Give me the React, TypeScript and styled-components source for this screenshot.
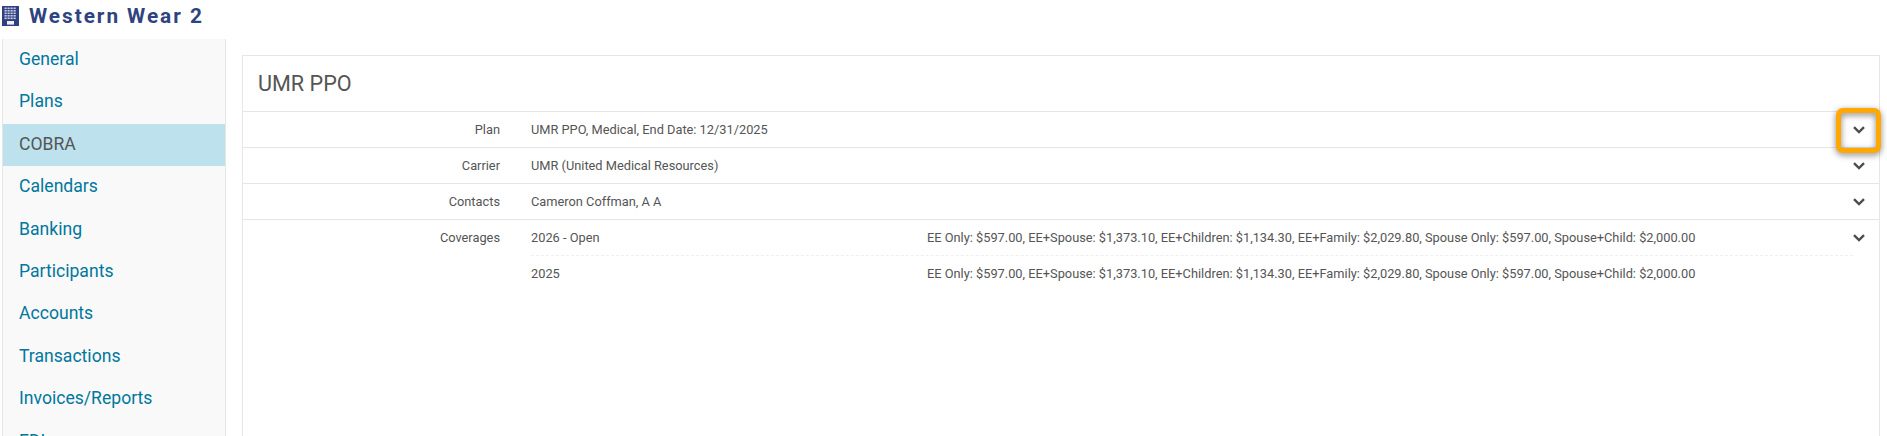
import React from "react";
import styled, { createGlobalStyle } from "styled-components";

const navItems = [
  "General",
  "Plans",
  "COBRA",
  "Calendars",
  "Banking",
  "Participants",
  "Accounts",
  "Transactions",
  "Invoices/Reports",
  "EDI",
];

const rates =
  "EE Only: $597.00, EE+Spouse: $1,373.10, EE+Children: $1,134.30, EE+Family: $2,029.80, Spouse Only: $597.00, Spouse+Child: $2,000.00";

const Chevron = () => (
  <svg width="12" height="8" viewBox="0 0 12 8" aria-hidden="true">
    <path d="M1 1.2 6 6 11 1.2" fill="none" stroke="#4d4d4d" strokeWidth="2.4" />
  </svg>
);

const BuildingIcon = () => (
  <svg width="17" height="20" viewBox="0 0 17 20" aria-hidden="true">
    <rect width="17" height="20" fill="#2f3f7f" />
    <g fill="#c3cae2">
      {[1.5, 4, 6.5, 9, 11.5].map((y) =>
        [2.5, 5.5, 8.5, 11.5].map((x) => <rect key={`${x}-${y}`} x={x} y={y} width="2.2" height="1.6" />)
      )}
    </g>
    <rect x="5" y="15" width="7" height="3.6" fill="#eef0f7" />
  </svg>
);

export default function App() {
  return (
    <Page>
      <GlobalStyle />
      <Header>
        <BuildingIcon />
        <CompanyName>Western Wear 2</CompanyName>
      </Header>
      <Body>
        <Sidebar>
          {navItems.map((item) => (
            <NavItem key={item} $active={item === "COBRA"}>
              {item}
            </NavItem>
          ))}
        </Sidebar>
        <Panel>
          <PanelTitle>UMR PPO</PanelTitle>
          <Row>
            <Label>Plan</Label>
            <Value>UMR PPO, Medical, End Date: 12/31/2025</Value>
            <ToggleSlot>
              <Highlight />
              <Chevron />
            </ToggleSlot>
          </Row>
          <Row>
            <Label>Carrier</Label>
            <Value>UMR (United Medical Resources)</Value>
            <ToggleSlot>
              <Chevron />
            </ToggleSlot>
          </Row>
          <Row>
            <Label>Contacts</Label>
            <Value>Cameron Coffman, A A</Value>
            <ToggleSlot>
              <Chevron />
            </ToggleSlot>
          </Row>
          <Row>
            <Label>Coverages</Label>
            <CoverageList>
              <CoverageRow>
                <Year>2026 - Open</Year>
                <span>{rates}</span>
              </CoverageRow>
              <CoverageRow>
                <Year>2025</Year>
                <span>{rates}</span>
              </CoverageRow>
            </CoverageList>
            <ToggleSlot>
              <Chevron />
            </ToggleSlot>
          </Row>
        </Panel>
      </Body>
    </Page>
  );
}

const GlobalStyle = createGlobalStyle`
  html, body {
    margin: 0;
    height: 436px;
    overflow: hidden;
    background: #fff;
  }
  body {
    font-family: Roboto, "Liberation Sans", sans-serif;
    color: #555;
  }
`;

const Page = styled.div`
  width: 1887px;
  height: 436px;
  overflow: hidden;
  padding-left: 2px;
  box-sizing: border-box;
`;

const Header = styled.header`
  display: flex;
  align-items: center;
  gap: 10px;
  height: 39px;
  padding: 0 0 8px;
  box-sizing: border-box;
`;

const CompanyName = styled.h1`
  margin: 0;
  font-size: 20.8px;
  font-weight: 700;
  letter-spacing: 1.95px;
  color: #2f4380;
`;

const Body = styled.div`
  display: flex;
  align-items: stretch;
  gap: 16px;
  height: 397px;
`;

const Sidebar = styled.nav`
  flex: 0 0 224px;
  box-sizing: border-box;
  border-left: 1px solid #e6e6e6;
  border-right: 1px solid #e6e6e6;
  background: #f9f9f9;
  overflow: hidden;
`;

const NavItem = styled.div<{ $active?: boolean }>`
  height: 42.4px;
  line-height: 41px;
  padding-left: 16px;
  font-size: 17.6px;
  color: ${({ $active }) => ($active ? "#555" : "#00779e")};
  background: ${({ $active }) => ($active ? "#bde2ee" : "transparent")};
`;

const Panel = styled.section`
  flex: 0 0 1638px;
  box-sizing: border-box;
  margin-top: 16px;
  height: 400px;
  border: 1px solid #e6e6e6;
  background: #fff;
`;

const PanelTitle = styled.h2`
  margin: 0;
  height: 55px;
  padding: 0 15px;
  font-size: 21.6px;
  font-weight: 400;
  line-height: 55px;
  color: #555;
`;

const Row = styled.div`
  display: flex;
  border-top: 1px solid #e6e6e6;
  font-size: 12.8px;
  line-height: 35px;
  min-height: 35px;
`;

const Label = styled.div`
  flex: 0 0 257px;
  text-align: right;
  margin-right: 31px;
`;

const Value = styled.div`
  flex: 1;
`;

const CoverageList = styled.div`
  flex: 1;
`;

const CoverageRow = styled.div`
  display: flex;
  & + & {
    border-top: 1px dashed #efefef;
  }
`;

const Year = styled.div`
  flex: 0 0 396px;
`;

const ToggleSlot = styled.div`
  position: relative;
  flex: 0 0 26px;
  height: 35px;
  display: flex;
  align-items: center;
  box-sizing: border-box;
`;

const Highlight = styled.span`
  position: absolute;
  left: -17px;
  top: -4px;
  width: 45px;
  height: 45px;
  box-sizing: border-box;
  border: 5px solid #ffa900;
  border-radius: 7px;
  filter: drop-shadow(0 2px 3px rgba(0, 0, 0, 0.5));
`;
